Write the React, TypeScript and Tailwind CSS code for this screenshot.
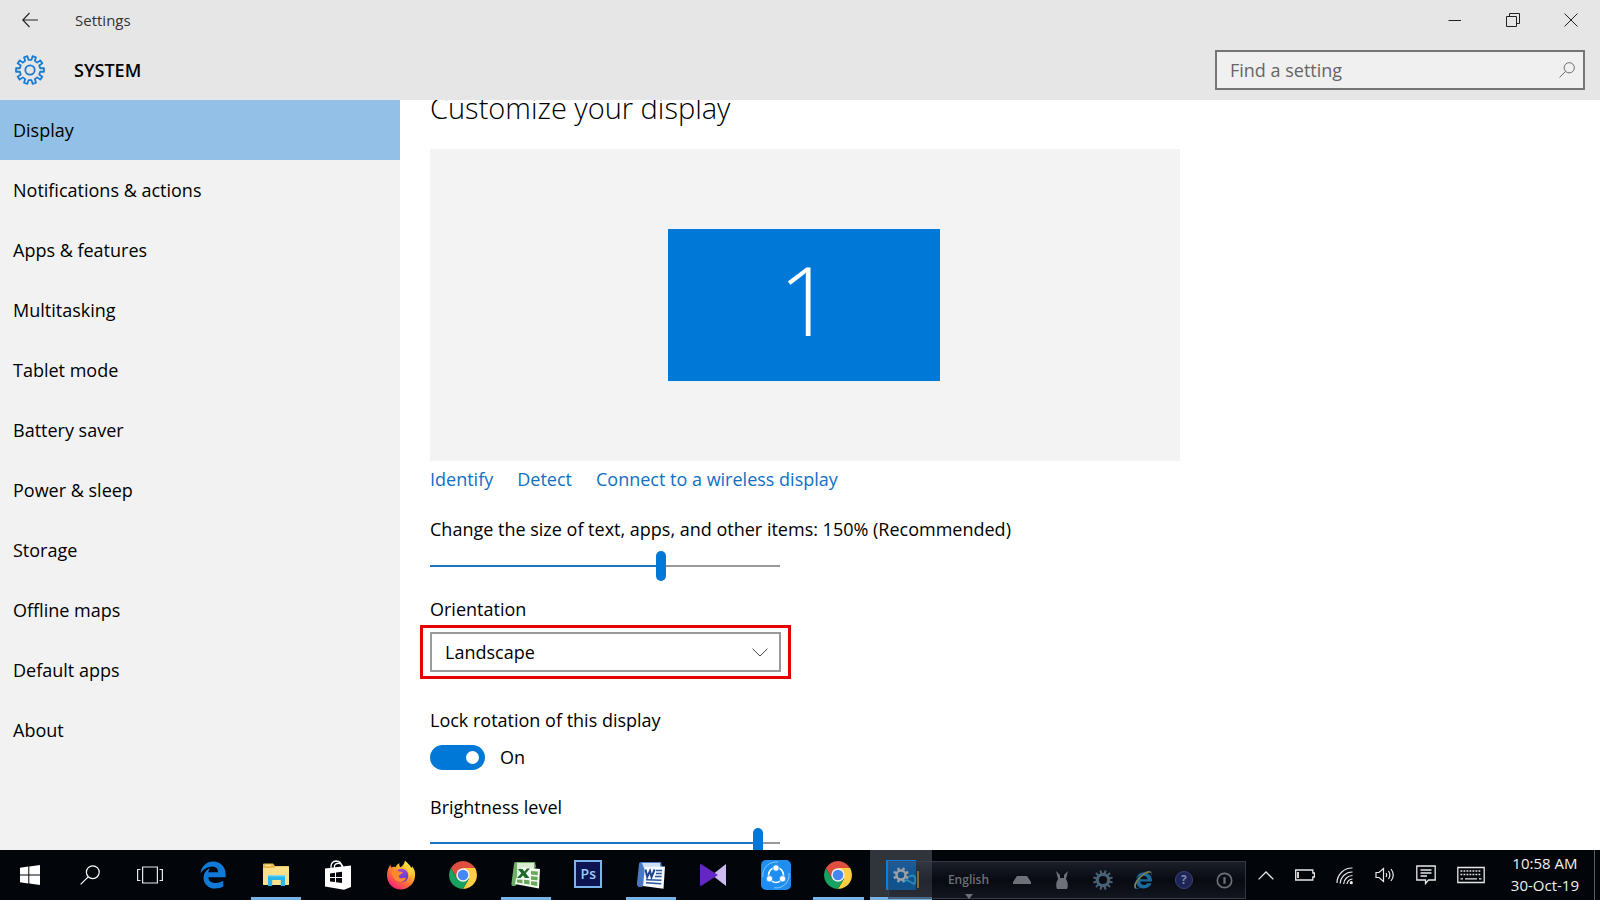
import { useState, type CSSProperties, type ReactNode } from "react";
import { FaEdgeLegacy, FaInternetExplorer } from "react-icons/fa6";

const NAV_ITEMS = [
  "Display",
  "Notifications & actions",
  "Apps & features",
  "Multitasking",
  "Tablet mode",
  "Battery saver",
  "Power & sleep",
  "Storage",
  "Offline maps",
  "Default apps",
  "About",
];

/** Outline of a cog centred on (c, c); a gap between teeth faces up. */
function gearPath(teeth: number, c: number, outer: number, inner: number) {
  const step = (Math.PI * 2) / teeth;
  const point = (r: number, a: number) =>
    `${(c + r * Math.sin(a)).toFixed(2)} ${(c - r * Math.cos(a)).toFixed(2)}`;
  const parts: string[] = [];
  for (let i = 0; i < teeth; i++) {
    const a = (i + 0.5) * step;
    parts.push(point(inner, a - step * 0.27));
    parts.push(point(outer, a - step * 0.2));
    parts.push(point(outer, a + step * 0.2));
    parts.push(point(inner, a + step * 0.27));
  }
  return `M${parts.join("L")}Z`;
}

function GearOutline({ className }: { className: string }) {
  return (
    <svg viewBox="0 0 32 32" className={className} fill="none" stroke="currentColor" strokeWidth="1.900" strokeLinejoin="round" aria-hidden="true">
      <path d={gearPath(10, 16, 15, 11)} />
      <circle cx="16" cy="16" r="5" />
    </svg>
  );
}

function GearSolid({ className, teeth }: { className: string; teeth: number }) {
  return (
    <svg viewBox="0 0 32 32" className={className} fill="currentColor" fillRule="evenodd" aria-hidden="true">
      <path d={`${gearPath(teeth, 16, 16, 11.5)}M16 9.500A6.500 6.500 0 1 0 16 22.500A6.500 6.500 0 1 0 16 9.500Z`} />
    </svg>
  );
}

function Magnifier({ className }: { className: string }) {
  return (
    <svg viewBox="0 0 20 20" className={className} fill="none" stroke="currentColor" strokeWidth="1.200" aria-hidden="true">
      <circle cx="12.800" cy="7.200" r="6.400" />
      <path d="M8.200 11.800 .6 19.400" />
    </svg>
  );
}

function Slider({ id, value }: { id: string; value: number }) {
  const [level, setLevel] = useState(value);
  return (
    <input
      id={id}
      type="range"
      min={0}
      max={300}
      value={level}
      onChange={(e) => setLevel(Number(e.target.value))}
      style={{ "--fill": `${level / 3}%` } as CSSProperties}
      className="block h-[30px] w-full appearance-none bg-[linear-gradient(to_right,#1a73c6_var(--fill),#999999_var(--fill))] bg-[length:100%_2px] bg-center bg-no-repeat [&::-webkit-slider-runnable-track]:h-[30px] [&::-webkit-slider-thumb]:h-[30px] [&::-webkit-slider-thumb]:w-[10px] [&::-webkit-slider-thumb]:appearance-none [&::-webkit-slider-thumb]:rounded-full [&::-webkit-slider-thumb]:bg-[#0078d7]"
    />
  );
}

function Chrome() {
  return (
    <svg viewBox="2 2 44 44" className="size-7" aria-hidden="true">
      <path fill="#de4f40" d="M24 13H43.05A22 22 0 0 0 4.95 13L14.47 29.5 24 24Z" />
      <path fill="#ffce43" d="M43.05 13A22 22 0 0 1 24 46L33.53 29.5 24 13Z" />
      <path fill="#19a15f" d="M4.95 13A22 22 0 0 0 24 46L33.53 29.5H14.47Z" />
      <circle cx="24" cy="24" r="10.500" fill="#f4f4f4" />
      <circle cx="24" cy="24" r="8.300" fill="#4587f3" />
    </svg>
  );
}

function Folder() {
  return (
    <svg viewBox="0 0 28 24" className="h-6 w-7" aria-hidden="true">
      <path fill="#e9b94d" d="M1 1.5Q1 .5 2 .5H11L13 3H26Q27 3 27 4V21Q27 22 26 22H2Q1 22 1 21Z" />
      <path fill="#fbe08a" d="M1 5H12L14 3.6H27V21Q27 22 26 22H2Q1 22 1 21Z" />
      <path fill="#fff3c4" d="M3.5 1.8H9V2.8H3.5Z" />
      <path fill="#2cb5e8" d="M6 12H23V23H18.8V17H10.2V23H6Z" />
      <path fill="#7fd6f5" d="M6 12H23V13.4H6Z" />
    </svg>
  );
}

function Store() {
  return (
    <svg viewBox="0 0 28 30" className="h-[30px] w-7" aria-hidden="true">
      <path d="M7 9V6Q7.500 1.500 12 1Q17.500 1 18 7M10.500 8V5.500Q12 2.500 16 3.500Q19 5 19 8" fill="none" stroke="#fff" strokeWidth="1.300" />
      <path fill="#fff" d="M1 8.500 27 5.500V27L20 29.800 1 26.500Z" />
      <path fill="#05070c" d="M6 13.600 11 12.800V17H6ZM12 12.600 18 11.800V17H12ZM6 18H11V22L6 21.400ZM12 18H18V23L12 22.200Z" />
    </svg>
  );
}

function Firefox() {
  return (
    <svg viewBox="0 0 30 30" className="size-[30px]" aria-hidden="true">
      <defs>
        <linearGradient id="ff-body" x1=".85" y1=".05" x2=".2" y2=".95">
          <stop offset="0" stopColor="#fff44f" />
          <stop offset=".35" stopColor="#ffb02a" />
          <stop offset=".65" stopColor="#ff6a3a" />
          <stop offset="1" stopColor="#f0207a" />
        </linearGradient>
        <linearGradient id="ff-globe" x1=".3" y1="0" x2=".7" y2="1">
          <stop offset="0" stopColor="#a04be0" />
          <stop offset="1" stopColor="#5a38c8" />
        </linearGradient>
      </defs>
      <path fill="url(#ff-body)" d="M19 .5C20.500 2.500 24 4.500 25.500 8C26 7.500 26 6.800 26 6.200C28.500 9 29.500 12.300 29 16.500C28.200 24 22 29.500 15 29.500C7 29.500 1 23.500 1 15.500C1 11 2.200 7.500 4.600 4.800C4.600 5.800 4.700 6.700 5.200 7.500C7 6.500 8.600 6.700 9.800 7C10.500 5 12 3.800 13.500 3.300C13 4.700 13.300 6 14.300 7.200C16.500 6 18.500 4 19 .5Z" />
      <circle cx="15.500" cy="15.500" r="6.800" fill="url(#ff-globe)" />
      <path fill="#ff8a2b" d="M5.500 11.500C8 9.500 11 10 13 11.500L17 12C16.500 14 14 14.200 13 15.400C12.200 17.500 14.500 19 17 18C18.500 17.500 19.500 18 20 18.500C18.500 21.500 15 22.700 12 21.500C8 20 6 16 5.500 11.500Z" />
      <path fill="#ffd43a" d="M18 6.500C22 9 23.500 12.500 22.800 17C24.800 15.500 25.800 12.500 25.500 9.500L20 3Z" />
    </svg>
  );
}

function Excel() {
  return (
    <svg viewBox="0 0 30 28" className="h-7 w-[30px]" aria-hidden="true">
      <path fill="#6fae6a" d="M5 1H24L25 6 4 25H2Q0 25 .5 22L3 3Q3 1 5 1Z" />
      <path fill="#d8ecd2" d="M6 2H23V7L6 18Z" />
      <path fill="#f4faf1" d="M11 6 29 8 28 27.500 4 23 5 18Z" />
      <path fill="#6aa95c" d="M20 10 26.800 10.600V14.200L20 13.600ZM20 15.200 26.600 15.800V19.300L20 18.700ZM13 18.700 18.500 19.200V23.500L13 22.800ZM20 20.200 26.300 20.700V25L20 24ZM6 18.500 11.500 18.700V22.500L6 21.500Z" />
      <path fill="#1f6b2d" d="M7 8 11.500 8 13.400 10.400 16 7.500H19L14.800 12.300 18.500 17H14L12 14.400 9.500 17H6L10.300 12.200Z" />
    </svg>
  );
}

function Word() {
  return (
    <svg viewBox="0 0 30 28" className="h-7 w-[30px]" aria-hidden="true">
      <path fill="#4a78c4" d="M5 1H25L26 6 6 26H3Q.5 25 1 22L3 3Q3 1 5 1Z" />
      <path fill="#cfe0f6" d="M6 2H24V6L9 10Z" />
      <path fill="#f6f9fe" d="M9 6 29 5.500 27.500 27.800 7 25Z" />
      <path fill="none" stroke="#2b5597" strokeWidth="1.500" d="M20 9.500H26M20 12.500H25.800M19 15.500H25.600M10 18.700 25.400 19.200M10 21.700 25.200 22.800" />
      <path fill="none" stroke="#1f4590" strokeWidth="2" d="M9.500 8.500 11.200 16 14 10 15.500 16 18.600 8.500" />
    </svg>
  );
}

function ShareApp() {
  return (
    <svg viewBox="0 0 30 30" className="size-[30px]" aria-hidden="true">
      <rect width="30" height="30" rx="5" fill="#1e8ff0" />
      <path d="M2 17A13 13 0 0 1 17 2.200M28 13A13 13 0 0 1 13 27.800" fill="none" stroke="#8cc8fa" strokeWidth="1" />
      <circle cx="15" cy="15" r="7.500" fill="none" stroke="#fff" strokeWidth="1.600" />
      <g fill="#fff" stroke="#1e8ff0" strokeWidth=".8">
        <circle cx="15" cy="8" r="3.200" />
        <circle cx="8.500" cy="18.800" r="3.200" />
        <circle cx="21.500" cy="18.800" r="3.200" />
      </g>
    </svg>
  );
}

const APPS: { name: string; icon: ReactNode; open?: boolean }[] = [
  { name: "Edge", icon: <FaEdgeLegacy className="size-7 text-[#0f7ad8]" /> },
  { name: "File Explorer", icon: <Folder />, open: true },
  { name: "Store", icon: <Store /> },
  { name: "Firefox", icon: <Firefox /> },
  { name: "Chrome", icon: <Chrome /> },
  { name: "Excel", icon: <Excel />, open: true },
  {
    name: "Photoshop",
    icon: (
      <span className="mb-[2px] flex h-7 w-7 items-center justify-center border-2 border-[#7db4ee] bg-[#0e1450] text-sm font-semibold text-[#9cc9fb]">
        Ps
      </span>
    ),
  },
  { name: "Word", icon: <Word />, open: true },
  {
    name: "Media player",
    icon: (
      <svg viewBox="0 0 26 22" className="h-[22px] w-[26px]" aria-hidden="true">
        <path fill="#cdbcf2" d="M26 0V22L12 11Z" />
        <path fill="#6527c4" d="M1 0 18 11 1 22Q0 22 0 21V1Q0 0 1 0Z" />
      </svg>
    ),
  },
  { name: "Share", icon: <ShareApp /> },
  { name: "Chrome window", icon: <Chrome />, open: true },
];

function LanguageBar() {
  return (
    <div className="pointer-events-none absolute top-[11px] left-[18px] flex h-[38px] w-[358px] items-center border border-[#4a4d5c]/60 bg-linear-to-b from-[#34384a]/50 via-[#10121a]/40 to-[#222534]/50 text-[#6d7078]">
      <svg viewBox="0 0 18 20" className="ml-[14px] h-5 w-[18px]" fill="none" strokeWidth="1.800" aria-hidden="true">
        <path d="M1 12Q3 9 6 11T11 14Q13 12 12 7Q9 4 6 7" stroke="#3fa3c4" opacity=".7" />
        <path d="M15 1V18" stroke="#8a7634" />
      </svg>
      <div className="relative ml-[19px] w-[58px] text-center text-xs font-semibold">
        English
        <svg viewBox="0 0 8 5" className="absolute top-[22px] left-[25px] h-[5px] w-2" fill="currentColor" aria-hidden="true">
          <path d="M0 0H8L4 5Z" />
        </svg>
      </div>
      <div className="grid flex-1 grid-cols-6 items-center justify-items-center pl-1">
        <svg viewBox="0 0 18 10" className="h-[10px] w-[18px]" fill="currentColor" aria-hidden="true">
          <path d="M4 1H14L18 7V9H0V7Z" />
        </svg>
        <svg viewBox="0 0 14 18" className="h-[18px] w-[14px]" fill="currentColor" aria-hidden="true">
          <path d="M1 0 5 4V7H9V4L13 0 11 8Q14 13 12 18H2Q0 13 3 8Z" />
        </svg>
        <GearSolid className="size-5 text-[#4a6076]" teeth={12} />
        <span className="relative flex text-[#1b6a9c]">
          <FaInternetExplorer className="size-[18px]" />
          <svg viewBox="0 0 20 20" className="absolute inset-0 size-[18px]" fill="none" stroke="#8f8034" strokeWidth="1.500" aria-hidden="true">
            <path d="M2 19Q-1 14 9 5 17-1 18.500 2" />
          </svg>
        </span>
        <span className="flex size-[18px] items-center justify-center rounded-full border border-[#3b4470] bg-[#1c2458] text-xs font-bold text-[#7e86a8]">?</span>
        <svg viewBox="0 0 18 18" className="size-[17px]" fill="none" stroke="currentColor" strokeWidth="1.800" aria-hidden="true">
          <circle cx="9" cy="9" r="7.600" />
          <path d="M9 5.500V12.500" strokeWidth="2.400" />
        </svg>
      </div>
    </div>
  );
}

function TrayButton({ label, children }: { label: string; children: ReactNode }) {
  return (
    <button type="button" aria-label={label} className="flex h-full items-center justify-center">
      {children}
    </button>
  );
}

function Taskbar() {
  return (
    <footer className="flex h-[50px] shrink-0 items-stretch bg-[#02050a] text-white">
      <div className="mr-[2px] grid w-[180px] grid-cols-3">
        <TrayButton label="Start">
          <svg viewBox="0 0 20 20" className="size-5" fill="#fff" aria-hidden="true">
            <path d="M0 2.800 8.300 1.600V9.500H0ZM9.300 1.400 20 0V9.500H9.300ZM0 10.500H8.300V18.400L0 17.200ZM9.300 10.500H20V20L9.300 18.600Z" />
          </svg>
        </TrayButton>
        <TrayButton label="Search">
          <Magnifier className="size-5" />
        </TrayButton>
        <TrayButton label="Task view">
          <svg viewBox="0 0 26 18" className="h-[18px] w-[26px]" fill="none" stroke="#e8e8e8" strokeWidth="1.200" aria-hidden="true">
            <path d="M5.600 1H20.400V17H5.600ZM3.500 3.500H.6V14.500H3.500M22.500 3.500H25.400V14.500H22.500" />
          </svg>
        </TrayButton>
      </div>
      <div className="grid w-[750px] grid-cols-12">
        {APPS.map((app) => (
          <button key={app.name} type="button" aria-label={app.name} className="relative flex items-center justify-center">
            {app.icon}
            {app.open && <span className="absolute inset-x-[6px] bottom-0 h-[3px] bg-[#76b4e8]" />}
          </button>
        ))}
        <div className="relative">
          <button type="button" aria-label="Settings" className="flex h-full w-full items-center justify-center border-b-3 border-[#76b4e8] bg-[#30343b]">
            <span className="mt-[3px] flex size-[30px] items-center justify-center bg-[#0b7fe0]">
              <GearSolid className="size-4 text-white" teeth={8} />
            </span>
          </button>
          <LanguageBar />
        </div>
      </div>
      <div className="ml-auto flex items-center text-[#e8e8e8]">
        <div className="mr-[26px] flex h-full items-center gap-[21px]">
          <TrayButton label="Show hidden icons">
            <svg viewBox="0 0 16 9" className="h-[9px] w-4" fill="none" stroke="currentColor" strokeWidth="1.300" aria-hidden="true">
              <path d="M.6 8.400 8 1 15.400 8.400" />
            </svg>
          </TrayButton>
          <TrayButton label="Battery">
            <svg viewBox="0 0 20 12" className="h-3 w-5" fill="none" stroke="currentColor" strokeWidth="1.300" aria-hidden="true">
              <path d="M.7 1H17.800V4H19.400V8H17.800V11H.7Z" />
              <path d="M3 3V9" strokeWidth="1.800" />
            </svg>
          </TrayButton>
          <TrayButton label="Network">
            <svg viewBox="0 0 18 18" className="mt-[2px] size-[18px]" fill="none" stroke="currentColor" strokeWidth="1.200" aria-hidden="true">
              <path d="M1 16A15 15 0 0 1 16.500 1M4.200 16.600A12 12 0 0 1 16.500 5M7.600 17A9 9 0 0 1 16.500 8.500M11 17A6 6 0 0 1 16.500 12" />
              <circle cx="15.300" cy="15.700" r="1.600" fill="currentColor" stroke="none" />
            </svg>
          </TrayButton>
          <TrayButton label="Volume">
            <svg viewBox="0 0 20 16" className="h-4 w-5" fill="none" stroke="currentColor" strokeWidth="1.200" aria-hidden="true">
              <path d="M1 5.500H4L8.500 1.500V14.500L4 10.500H1Z" />
              <path d="M11 6Q12.400 8 11 10M13.500 4Q16.200 8 13.500 12M16 2Q20.500 8 16 14" />
            </svg>
          </TrayButton>
          <TrayButton label="Notifications">
            <svg viewBox="0 0 20 20" className="size-5" fill="none" stroke="currentColor" strokeWidth="1.300" aria-hidden="true">
              <path d="M.8 1H19.200V15H12.500L9.500 18.500V15H.8ZM4.500 5H15.500M4.500 8H15.500M4.500 11H11" />
            </svg>
          </TrayButton>
          <TrayButton label="Touch keyboard">
            <svg viewBox="0 0 28 18" className="h-[18px] w-7" fill="none" stroke="currentColor" strokeWidth="1.300" aria-hidden="true">
              <path d="M.8 1.500H27.200V16.500H.8Z" />
              <path d="M3.500 5H24.500M3.500 8.500H24.500" strokeDasharray="1.800 1.200" />
              <path d="M3.500 12.800H6M8 12.800H20M22 12.800H24.500" />
            </svg>
          </TrayButton>
        </div>
        <div className="mr-[15px] mb-[2px] text-center text-[15px] leading-[22px] text-[#f0f0f0]">
          <div>10:58 AM</div>
          <div>30-Oct-19</div>
        </div>
        <div className="mr-[5px] h-full w-px bg-[#5a5d62]" />
      </div>
    </footer>
  );
}

function TitleBar() {
  return (
    <header className="h-[100px] shrink-0 bg-[#e6e6e6]">
      <div className="flex h-10 items-center justify-between pl-[22px]">
        <div className="flex items-center">
          <button type="button" aria-label="Back" className="mr-[37px]">
            <svg viewBox="0 0 16 16" className="block size-4" fill="none" stroke="#222" strokeWidth="1.100" aria-hidden="true">
              <path d="M7.500 1 .8 8 7.500 15M.8 8H16" />
            </svg>
          </button>
          <span className="pt-[2px] text-[15px] text-[#333]">Settings</span>
        </div>
        <div className="mr-[22px] flex items-center gap-11 text-[#222]">
          <button type="button" aria-label="Minimize">
            <svg viewBox="0 0 14 14" className="block size-[14px]" stroke="currentColor" aria-hidden="true">
              <path d="M.5 7.500H13" />
            </svg>
          </button>
          <button type="button" aria-label="Restore">
            <svg viewBox="0 0 14 14" className="block size-[14px]" fill="none" stroke="currentColor" aria-hidden="true">
              <path d="M.5 3.500H10.500V13.500H.5ZM3.500 3.500V.5H13.500V10.500H10.500" />
            </svg>
          </button>
          <button type="button" aria-label="Close">
            <svg viewBox="0 0 14 14" className="block size-[14px]" fill="none" stroke="currentColor" aria-hidden="true">
              <path d="M.5.5 13.500 13.500M13.500.5.5 13.500" />
            </svg>
          </button>
        </div>
      </div>
      <div className="flex h-[60px] items-center px-[15px]">
        <GearOutline className="size-[30px] text-[#1a7bd0]" />
        <h1 className="ml-[29px] text-lg font-semibold text-black">SYSTEM</h1>
        <div className="ml-auto flex h-10 w-[370px] items-center border-2 border-[#767676] bg-[#f0f0f0] pr-2 pl-[13px]">
          <input
            type="search"
            aria-label="Find a setting"
            placeholder="Find a setting"
            className="min-w-0 flex-1 bg-transparent text-lg outline-none placeholder:text-[#666]"
          />
          <Magnifier className="size-4 text-[#666]" />
        </div>
      </div>
    </header>
  );
}

export default function App() {
  const [locked, setLocked] = useState(true);
  return (
    <div className="flex h-screen flex-col overflow-hidden bg-white font-['Open_Sans','Noto_Sans',sans-serif] text-lg text-black">
      <TitleBar />
      <div className="flex min-h-0 flex-1">
        <nav className="w-1/4 shrink-0 bg-[#f2f2f2]">
          <ul>
            {NAV_ITEMS.map((item, i) => (
              <li key={item}>
                <a
                  href={`#section-${i}`}
                  aria-current={i === 0 ? "page" : undefined}
                  className="flex h-[60px] items-center pl-[13px] aria-[current=page]:bg-[#92c0e6]"
                >
                  {item}
                </a>
              </li>
            ))}
          </ul>
        </nav>
        <main className="min-w-0 flex-1 overflow-hidden pl-[30px]">
          <h2 className="-mt-3 text-[29px] leading-10 font-light">Customize your display</h2>
          <div className="mt-[21px] flex h-[312px] max-w-[750px] items-center justify-center bg-[#f3f3f3] pr-[2px]">
            <div className="flex h-[152px] w-[272px] items-center justify-center bg-[#0078d7] pb-3 pl-1 text-[96px] leading-none font-light text-white">
              1
            </div>
          </div>
          <div className="mt-1 flex h-7 items-center gap-6 text-[#0f70c4]">
            <a href="#identify">Identify</a>
            <a href="#detect">Detect</a>
            <a href="#connect">Connect to a wireless display</a>
          </div>
          <label htmlFor="scale" className="mt-[22px] block leading-7">
            Change the size of text, apps, and other items: 150% (Recommended)
          </label>
          <div className="mt-2 w-[350px]">
            <Slider id="scale" value={199} />
          </div>
          <label htmlFor="orientation" className="mt-[14px] block leading-7">
            Orientation
          </label>
          <div className="relative mt-[2px] -ml-[10px] w-[371px] border-3 border-[#e60000] px-[7px] py-1">
            <select id="orientation" className="block h-10 w-full appearance-none border-2 border-[#999] bg-white pl-[13px]">
              <option>Landscape</option>
              <option>Portrait</option>
              <option>Landscape (flipped)</option>
              <option>Portrait (flipped)</option>
            </select>
            <svg viewBox="0 0 16 9" className="pointer-events-none absolute top-5 right-5 h-[9px] w-4" fill="none" stroke="#444" aria-hidden="true">
              <path d="M.6.8 8 8 15.400.8" />
            </svg>
          </div>
          <div className="mt-[27px] leading-7" id="lock-title">
            Lock rotation of this display
          </div>
          <label className="mt-[9px] flex h-7 items-center gap-[15px]">
            <input
              type="checkbox"
              role="switch"
              aria-labelledby="lock-title"
              checked={locked}
              onChange={(e) => setLocked(e.target.checked)}
              className="flex h-[25px] w-[55px] appearance-none items-center rounded-full bg-[#999] px-[6px] before:size-[13px] before:rounded-full before:bg-white checked:justify-end checked:bg-[#0078d7]"
            />
            {locked ? "On" : "Off"}
          </label>
          <label htmlFor="brightness" className="mt-[22px] block leading-7">
            Brightness level
          </label>
          <div className="mt-[7px] w-[350px]">
            <Slider id="brightness" value={285} />
          </div>
        </main>
      </div>
      <Taskbar />
    </div>
  );
}
